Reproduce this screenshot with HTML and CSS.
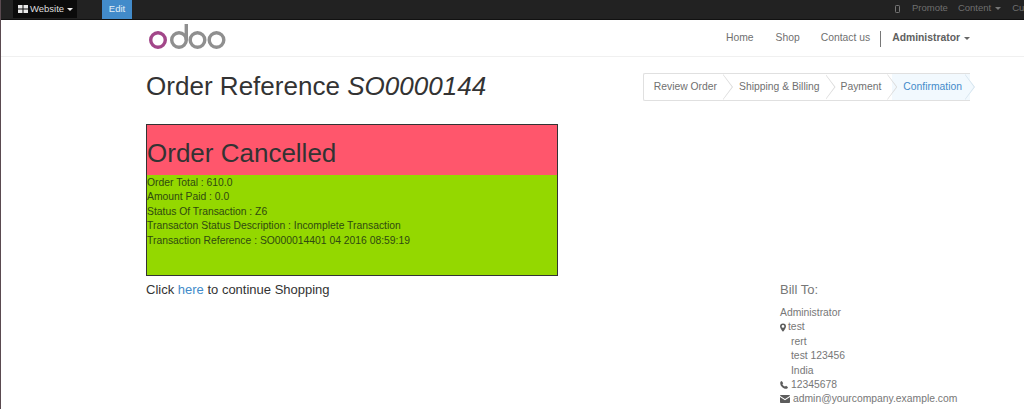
FILE: index.html
```html
<!DOCTYPE html>
<html lang="en">
<head>
<meta charset="utf-8">
<title>Order Reference SO0000144</title>
<link rel="stylesheet" href="styles.css">
</head>
<body>
<header class="topbar">
  <div class="top-left">
    <a class="site-btn">
      <svg class="ico-grid" viewBox="0 0 10 8" width="10" height="8"><rect x="0" y="0" width="4.5" height="3.5"/><rect x="5.5" y="0" width="4.5" height="3.5"/><rect x="0" y="4.5" width="4.5" height="3.5"/><rect x="5.5" y="4.5" width="4.5" height="3.5"/></svg>
      Website<span class="caret caret-white"></span>
    </a>
    <a class="edit-btn">Edit</a>
  </div>
  <nav class="top-right">
    <svg class="ico-mobile" viewBox="0 0 5 8" width="5" height="8"><rect x="0.5" y="0.5" width="4" height="7" rx="0.8"/></svg>
    <a class="promote">Promote</a>
    <a class="content">Content<span class="caret caret-gray"></span></a>
    <a class="cu">Cu</a>
  </nav>
</header>
<div class="navbar">
  <svg class="logo" viewBox="0 0 81 26" width="81" height="26" aria-label="odoo">
    <circle class="ring-pink" cx="12" cy="16" r="7.300"/>
    <circle class="ring-gray" cx="33" cy="16" r="7.300"/>
    <line class="ring-gray" x1="40.300" y1="0" x2="40.300" y2="16"/>
    <circle class="ring-gray" cx="51.500" cy="16" r="7.300"/>
    <circle class="ring-gray" cx="70.500" cy="16" r="7.300"/>
  </svg>
  <ul class="menu">
    <li>Home</li>
    <li>Shop</li>
    <li class="contact">Contact us</li>
    <li class="divider"></li>
    <li class="user">Administrator<span class="caret caret-gray2"></span></li>
  </ul>
</div>
<main class="page">
  <div class="title-row">
    <h1>Order Reference <em>SO0000144</em></h1>
    <ol class="steps">
      <li class="step step-1">Review Order</li>
      <li class="step step-2">Shipping &amp; Billing</li>
      <li class="step step-3">Payment</li>
      <li class="step step-4 current">Confirmation</li>
    </ol>
  </div>
  <div class="columns">
    <section class="left">
      <div class="status-box">
        <h2>Order Cancelled</h2>
        <div class="details">
          <div>Order Total : 610.0</div>
          <div>Amount Paid : 0.0</div>
          <div>Status Of Transaction : Z6</div>
          <div>Transacton Status Description : Incomplete Transaction</div>
          <div>Transaction Reference : SO000014401 04 2016 08:59:19</div>
        </div>
      </div>
      <p class="continue">Click <a>here</a> to continue Shopping</p>
    </section>
    <aside class="bill">
      <h4>Bill To:</h4>
      <div>Administrator</div>
      <div class="with-icon"><svg viewBox="0 0 8 11" width="6" height="9"><path fill-rule="evenodd" d="M4 0a4 4 0 0 0-4 4c0 2.200 2.600 5.600 4 7 1.400-1.400 4-4.800 4-7a4 4 0 0 0-4-4zm0 2.200a1.800 1.800 0 1 1 0 3.600 1.800 1.800 0 0 1 0-3.600z"/></svg>test</div>
      <div class="indent">rert</div>
      <div class="indent">test 123456</div>
      <div class="indent">India</div>
      <div class="with-icon phone"><svg viewBox="0 0 10 10" width="8" height="8"><path d="M2.300 0 .6 1C-.3 3.500 1 6 2.600 7.500 4.200 9.100 6.700 10.300 9.100 9.400l.9-1.700-2.400-1.700-1.300 1C5 6.700 3.500 5.200 3 4l1-1.300z"/></svg>12345678</div>
      <div class="with-icon mail"><svg viewBox="0 0 10 8" width="10" height="8"><path d="M.8 0h8.400c.4 0 .8.300.8.700L5 4 0 .7C0 .3.400 0 .8 0zM0 1.900 5 5.200l5-3.300v5.300c0 .4-.4.800-.8.800H.8C.4 8 0 7.600 0 7.200z"/></svg>admin@yourcompany.example.com</div>
    </aside>
  </div>
</main>
</body>
</html>
```
FILE: styles.css
```css
* { box-sizing: border-box; }
html, body { margin: 0; padding: 0; height: 409px; overflow: hidden; }
body {
  font-family: "Liberation Sans", Arial, sans-serif;
  font-size: 10.35px;
  line-height: 14.4px;
  color: #333;
  background: #fff;
  border-left: 1px solid #5a4a50;
}
.topbar {
  display: flex;
  justify-content: space-between;
  height: 20px;
  background: #222;
  border-bottom: 1px solid #111;
  font-size: 9.5px;
  white-space: nowrap;
  overflow: hidden;
}
.top-left { display: flex; align-items: flex-start; padding-left: 12px; }
.site-btn {
  display: flex;
  align-items: center;
  gap: 2px;
  width: 64px;
  height: 18px;
  padding-left: 5px;
  background: #0b0b0b;
  color: #ddd;
}
.ico-grid { fill: #e8e8e8; flex: none; }
.edit-btn {
  display: block;
  width: 30px;
  height: 20px;
  margin-left: 25px;
  background: #428bca;
  color: #e4eef7;
  text-align: center;
  line-height: 17px;
}
.top-right {
  display: flex;
  align-items: center;
  height: 17px;
  width: 129px;
  color: #6f6f6f;
  flex: none;
}
.ico-mobile { fill: none; stroke: #777; stroke-width: 1; margin-right: 12px; flex: none; }
.promote { margin-right: 10px; }
.content { margin-right: 11px; }
.caret { display: inline-block; width: 0; height: 0; border-style: solid; border-color: transparent; border-width: 3px 3px 0; vertical-align: middle; margin-left: 4px; }
.caret-white { border-top-color: #eee; margin-left: 1px; }
.caret-gray { border-top-color: #777; }
.caret-gray2 { border-top-color: #666; }

.navbar {
  display: flex;
  align-items: center;
  justify-content: space-between;
  height: 37px;
  width: 969px;
  padding-left: 145px;
  position: relative;
}
.navbar::after {
  content: "";
  position: absolute;
  left: 0;
  top: 36px;
  width: 1023px;
  border-bottom: 1px solid #f0f0f0;
}
.logo { display: block; margin-top: -3px; }
.ring-pink { fill: none; stroke: #a24689; stroke-width: 3.4; }
.ring-gray { fill: none; stroke: #8f8f8f; stroke-width: 3.4; }
.menu {
  display: flex;
  align-items: center;
  list-style: none;
  margin: 0;
  padding: 0;
  color: #707070;
}
.menu li { margin-left: 22px; white-space: nowrap; }
.menu li.contact { margin-left: 21px; }
.menu li.divider { width: 1px; height: 16px; background: #777; margin-left: 10px; }
.menu li.user { font-weight: bold; margin-left: 11px; color: #606060; }

.page { padding-left: 145px; width: 980px; }
.title-row {
  display: flex;
  justify-content: space-between;
  align-items: flex-start;
  height: 67px;
  padding-top: 15px;
  width: 824px;
}
h1 {
  margin: 0;
  font-weight: normal;
  font-size: 26.05px;
  line-height: 29px;
  color: #333;
  white-space: nowrap;
}
.steps {
  display: flex;
  list-style: none;
  margin: 1px 0 0;
  padding: 0;
  height: 28px;
  color: #707070;
  border: 1px solid #e0e0e0;
  border-right: 0;
  border-radius: 2px 0 0 2px;
}
.step {
  position: relative;
  display: flex;
  align-items: center;
  height: 26px;
  white-space: nowrap;
  padding: 0 11px;
}
.step-1 { padding-left: 10px; }
.step-3 { padding-left: 10px; }
.step-4 { padding-right: 8px; }
.step::after {
  content: "";
  position: absolute;
  right: -5px;
  top: 0;
  width: 10px;
  height: 26px;
  clip-path: polygon(0 0, 100% 50%, 0 100%, 0 96%, 88% 50%, 0 4%);
  background: #dcdcdc;
  z-index: 2;
}
.current { color: #428bca; background: #f2f9fe; }
.step-4::before {
  content: "";
  position: absolute;
  right: -5px;
  top: 0;
  width: 10px;
  height: 26px;
  background: #f2f9fe;
  clip-path: polygon(0 0, 100% 50%, 0 100%);
}
.step-4::after { background: #d6e4ee; }

.columns {
  display: grid;
  grid-template-columns: 634px 190px;
}
.status-box {
  width: 412px;
  height: 152px;
  border: 1px solid #333;
  background: #94d800;
}
h2 {
  margin: 0;
  height: 49.5px;
  padding-top: 14px;
  background: #ff566c;
  font-weight: normal;
  font-size: 26px;
  line-height: 29px;
  color: #333;
}
.details { padding-top: 1.5px; color: #2f4a10; }
.continue { margin: 6px 0 0; font-size: 13px; line-height: 16px; color: #333; }
.continue a { color: #428bca; }
.bill { padding-top: 157px; color: #777; white-space: nowrap; }
.bill h4 {
  margin: 0 0 7px;
  font-weight: normal;
  font-size: 13px;
  line-height: 18px;
  color: #777;
}
.with-icon { display: flex; align-items: center; gap: 2px; }
.with-icon svg { fill: #5c5c5c; flex: none; }
.phone { gap: 3px; }
.mail { gap: 3px; }
.mail svg { margin-top: -1px; }
.indent { padding-left: 11px; }
```
